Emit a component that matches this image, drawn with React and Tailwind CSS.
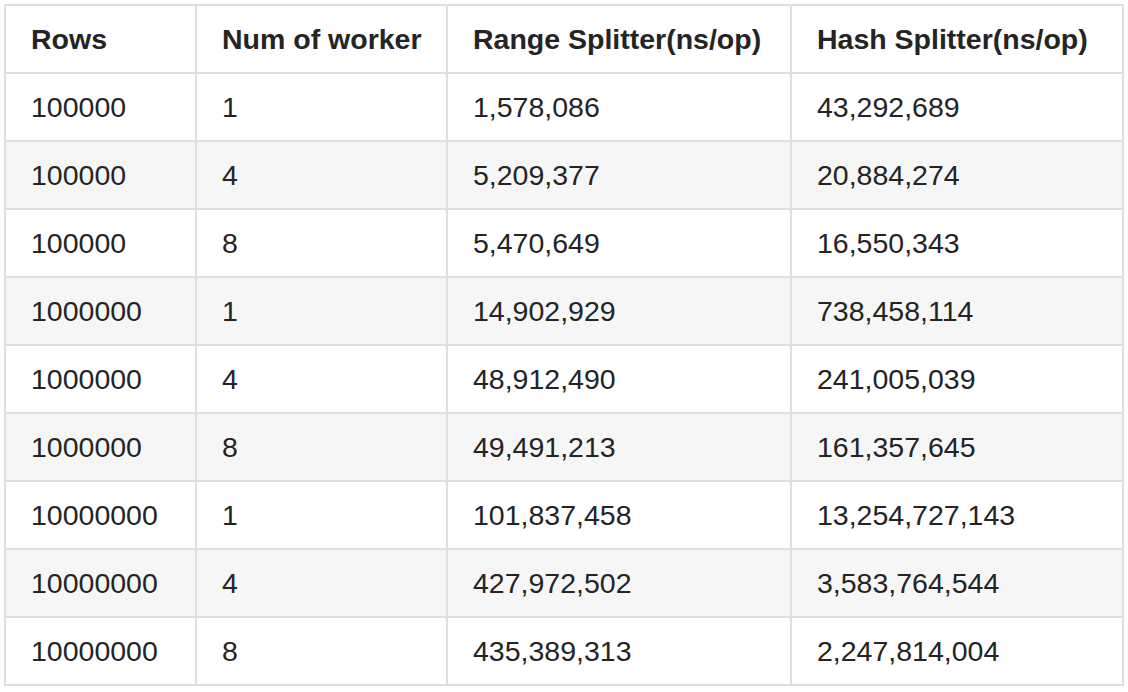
const rows = [
  ["100000", "1", "1,578,086", "43,292,689"],
  ["100000", "4", "5,209,377", "20,884,274"],
  ["100000", "8", "5,470,649", "16,550,343"],
  ["1000000", "1", "14,902,929", "738,458,114"],
  ["1000000", "4", "48,912,490", "241,005,039"],
  ["1000000", "8", "49,491,213", "161,357,645"],
  ["10000000", "1", "101,837,458", "13,254,727,143"],
  ["10000000", "4", "427,972,502", "3,583,764,544"],
  ["10000000", "8", "435,389,313", "2,247,814,004"],
];

const headers = ["Rows", "Num of worker", "Range Splitter(ns/op)", "Hash Splitter(ns/op)"];

export default function App() {
  return (
    <div className="w-[1128px] h-[692px] bg-white pt-[4px] pl-[4px] font-['Liberation_Sans',Arial,sans-serif] text-[#242424]">
      <table className="table-fixed border-collapse w-[1118px] text-[28.5px] leading-none">
        <colgroup>
          <col className="w-[191px]" />
          <col className="w-[251px]" />
          <col className="w-[344px]" />
          <col className="w-[332px]" />
        </colgroup>
        <thead>
          <tr className="h-[68px] bg-white">
            {headers.map((h) => (
              <th key={h} className="border-2 border-[#dfdfdf] pl-[25px] text-left font-bold align-middle">
                {h}
              </th>
            ))}
          </tr>
        </thead>
        <tbody>
          {rows.map((r, i) => (
            <tr key={i} className={"h-[68px] " + (i % 2 === 1 ? "bg-[#f6f6f6]" : "bg-white")}>
              {r.map((c, j) => (
                <td key={j} className="border-2 border-[#dfdfdf] pl-[25px] text-left align-middle">
                  {c}
                </td>
              ))}
            </tr>
          ))}
        </tbody>
      </table>
    </div>
  );
}
